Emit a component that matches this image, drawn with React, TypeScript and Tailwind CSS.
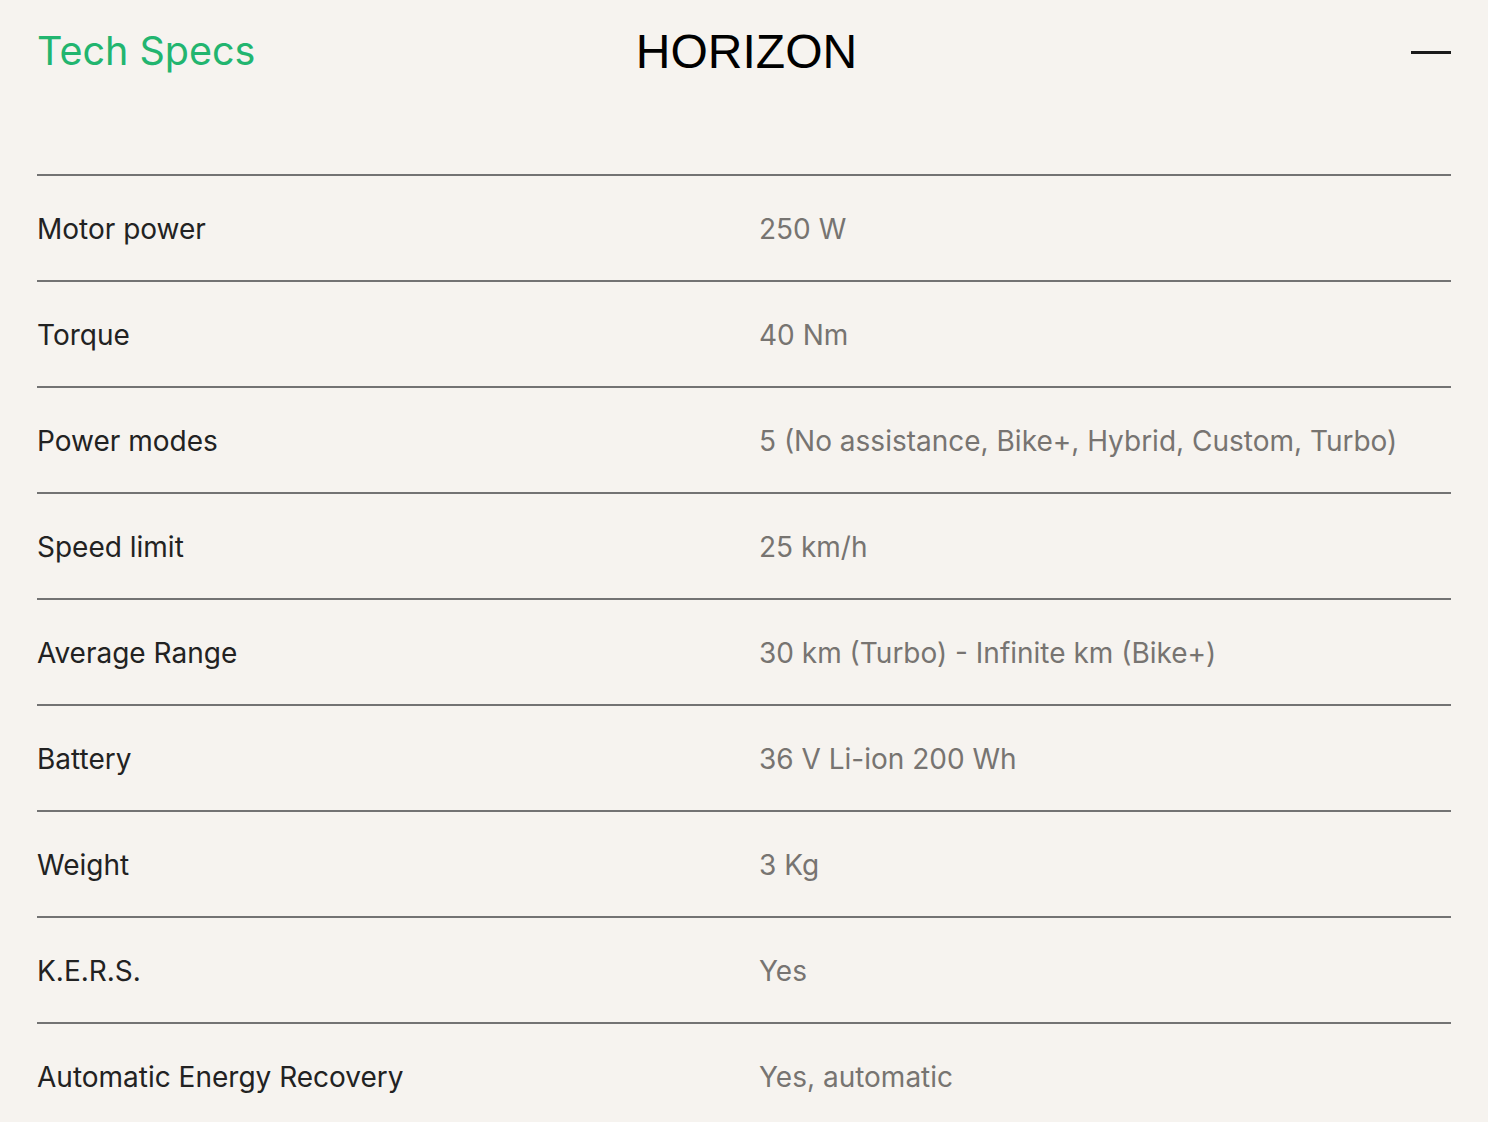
const specs: { label: string; value: string }[] = [
  { label: "Motor power", value: "250 W" },
  { label: "Torque", value: "40 Nm" },
  { label: "Power modes", value: "5 (No assistance, Bike+, Hybrid, Custom, Turbo)" },
  { label: "Speed limit", value: "25 km/h" },
  { label: "Average Range", value: "30 km (Turbo) - Infinite km (Bike+)" },
  { label: "Battery", value: "36 V Li-ion 200 Wh" },
  { label: "Weight", value: "3 Kg" },
  { label: "K.E.R.S.", value: "Yes" },
  { label: "Automatic Energy Recovery", value: "Yes, automatic" },
];

export default function App() {
  return (
    <div className="min-h-screen bg-[#f6f3ef] pl-[37px] pr-[37px] font-['Inter','Liberation_Sans',sans-serif]">
      <div className="grid h-[104px] grid-cols-[1fr_auto_1fr] items-center">
        <h2 className="text-[39.5px] leading-none text-[#22b56f]">Tech Specs</h2>
        <h1 className="pl-[5px] font-['Liberation_Sans',Arial,sans-serif] text-[48px] leading-none text-black">
          HORIZON
        </h1>
        <div className="flex justify-end">
          <span className="block h-[3px] w-[40px] bg-[#1a1a1a]" />
        </div>
      </div>
      <div className="mt-[70px] border-t-2 border-[#737373]">
        {specs.map((spec) => (
          <div
            key={spec.label}
            className="grid h-[106px] grid-cols-[722px_1fr] items-center border-b-2 border-[#737373] pt-[1px] text-[28px]"
          >
            <span className="text-[#222]">{spec.label}</span>
            <span className="text-[#777471]">{spec.value}</span>
          </div>
        ))}
      </div>
    </div>
  );
}
